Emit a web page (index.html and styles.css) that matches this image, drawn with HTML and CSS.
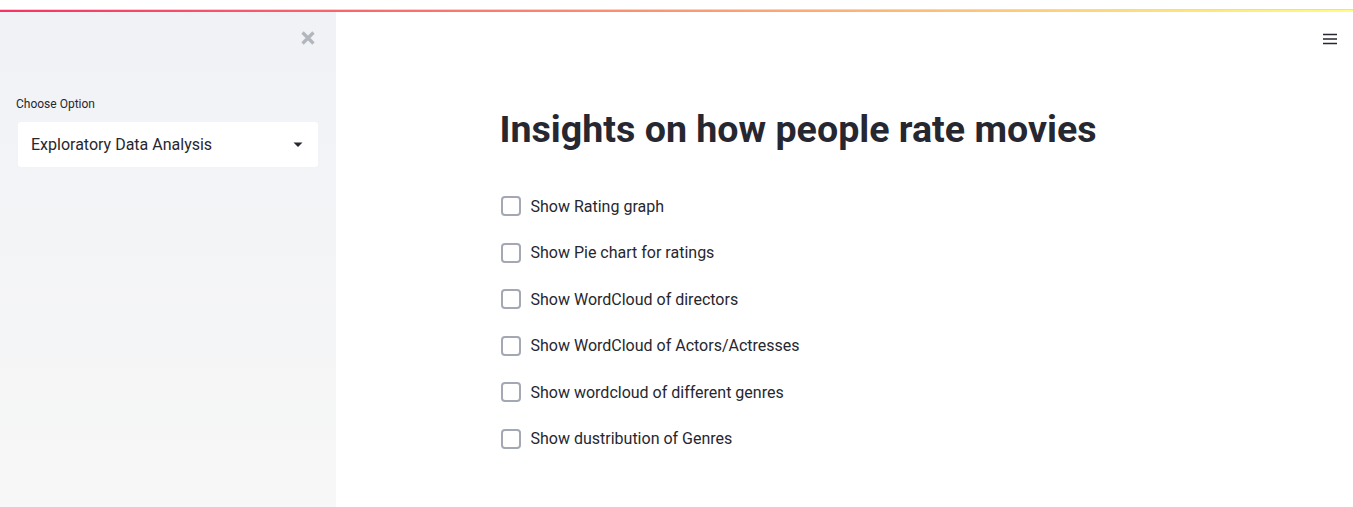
FILE: index.html
```html
<!DOCTYPE html>
<html>
<head>
<meta charset="utf-8">
<link rel="stylesheet" href="styles.css">
</head>
<body>
<div class="topgap"></div>
<div class="decoration"></div>
<div class="app">
  <aside class="sidebar">
    <div class="close-row">
      <svg class="close" width="14" height="14" viewBox="0 0 14 14"><path d="M1.5 1.5 L12.5 12.5 M12.5 1.5 L1.5 12.5" stroke="#b3b6bd" stroke-width="3.2" stroke-linecap="butt"/></svg>
    </div>
    <div class="field-label">Choose Option</div>
    <div class="select">
      <span class="select-value">Exploratory Data Analysis</span>
      <svg class="caret" width="10" height="6" viewBox="0 0 10 6"><path d="M0.5 0.5 H9.5 L5 5 Z" fill="#262730"/></svg>
    </div>
  </aside>
  <main class="main">
    <div class="menu-row">
      <svg class="menu" width="14" height="12" viewBox="0 0 14 12"><path d="M0 1.5 H14 M0 6 H14 M0 10.5 H14" stroke="#262730" stroke-width="1.6"/></svg>
    </div>
    <div class="block">
      <h1 class="title">Insights on how people rate movies</h1>
      <div class="checks">
        <label class="check"><span class="box"></span><span>Show Rating graph</span></label>
        <label class="check"><span class="box"></span><span>Show Pie chart for ratings</span></label>
        <label class="check"><span class="box"></span><span>Show WordCloud of directors</span></label>
        <label class="check"><span class="box"></span><span>Show WordCloud of Actors/Actresses</span></label>
        <label class="check"><span class="box"></span><span>Show wordcloud of different genres</span></label>
        <label class="check"><span class="box"></span><span>Show dustribution of Genres</span></label>
      </div>
    </div>
  </main>
</div>
</body>
</html>
```
FILE: styles.css
```css
* { box-sizing: border-box; }
html, body { margin: 0; padding: 0; }
body {
  width: 1353px;
  height: 507px;
  overflow: hidden;
  background: #ffffff;
  font-family: Roboto, "Liberation Sans", sans-serif;
  color: #262730;
}
.topgap {
  height: 10px;
  border-bottom: 1px solid #dadada;
  background: #ffffff;
}
.decoration {
  height: 2px;
  background: linear-gradient(90deg, #f63366, #fffd80);
}
.app {
  display: flex;
  height: 495px;
}
.sidebar {
  width: 336px;
  flex: none;
  background: linear-gradient(180deg, #f0f2f6, #f7f7f7);
  padding: 0 18px 0 16px;
}
.close-row {
  height: 52px;
  display: flex;
  justify-content: flex-end;
  align-items: center;
  padding-right: 3px;
}
.field-label {
  margin-top: 32px;
  font-size: 12px;
  line-height: 16px;
  height: 16px;
}
.select {
  margin-top: 10px;
  margin-left: 2px;
  width: 300px;
  height: 45px;
  background: #ffffff;
  border-radius: 3px;
  display: flex;
  align-items: center;
  justify-content: space-between;
  padding: 0 15px 0 13px;
  font-size: 16px;
}
.main {
  flex: 1;
  display: flex;
  flex-direction: column;
  align-items: center;
}
.menu-row {
  align-self: stretch;
  height: 54px;
  display: flex;
  justify-content: flex-end;
  align-items: center;
  padding-right: 16px;
}
.block {
  width: 690px;
}
.title {
  margin: 38px 0 0 0;
  font-size: 37.6px;
  line-height: 50px;
  font-weight: 700;
}
.checks {
  margin-top: 40px;
  display: flex;
  flex-direction: column;
  gap: 22.5px;
}
.check {
  display: flex;
  align-items: center;
  height: 24px;
  font-size: 16px;
  gap: 10px;
}
.box {
  width: 20px;
  height: 20px;
  margin-left: 1px;
  border: 2px solid #a3a8b4;
  border-radius: 4px;
  background: #ffffff;
}
```
